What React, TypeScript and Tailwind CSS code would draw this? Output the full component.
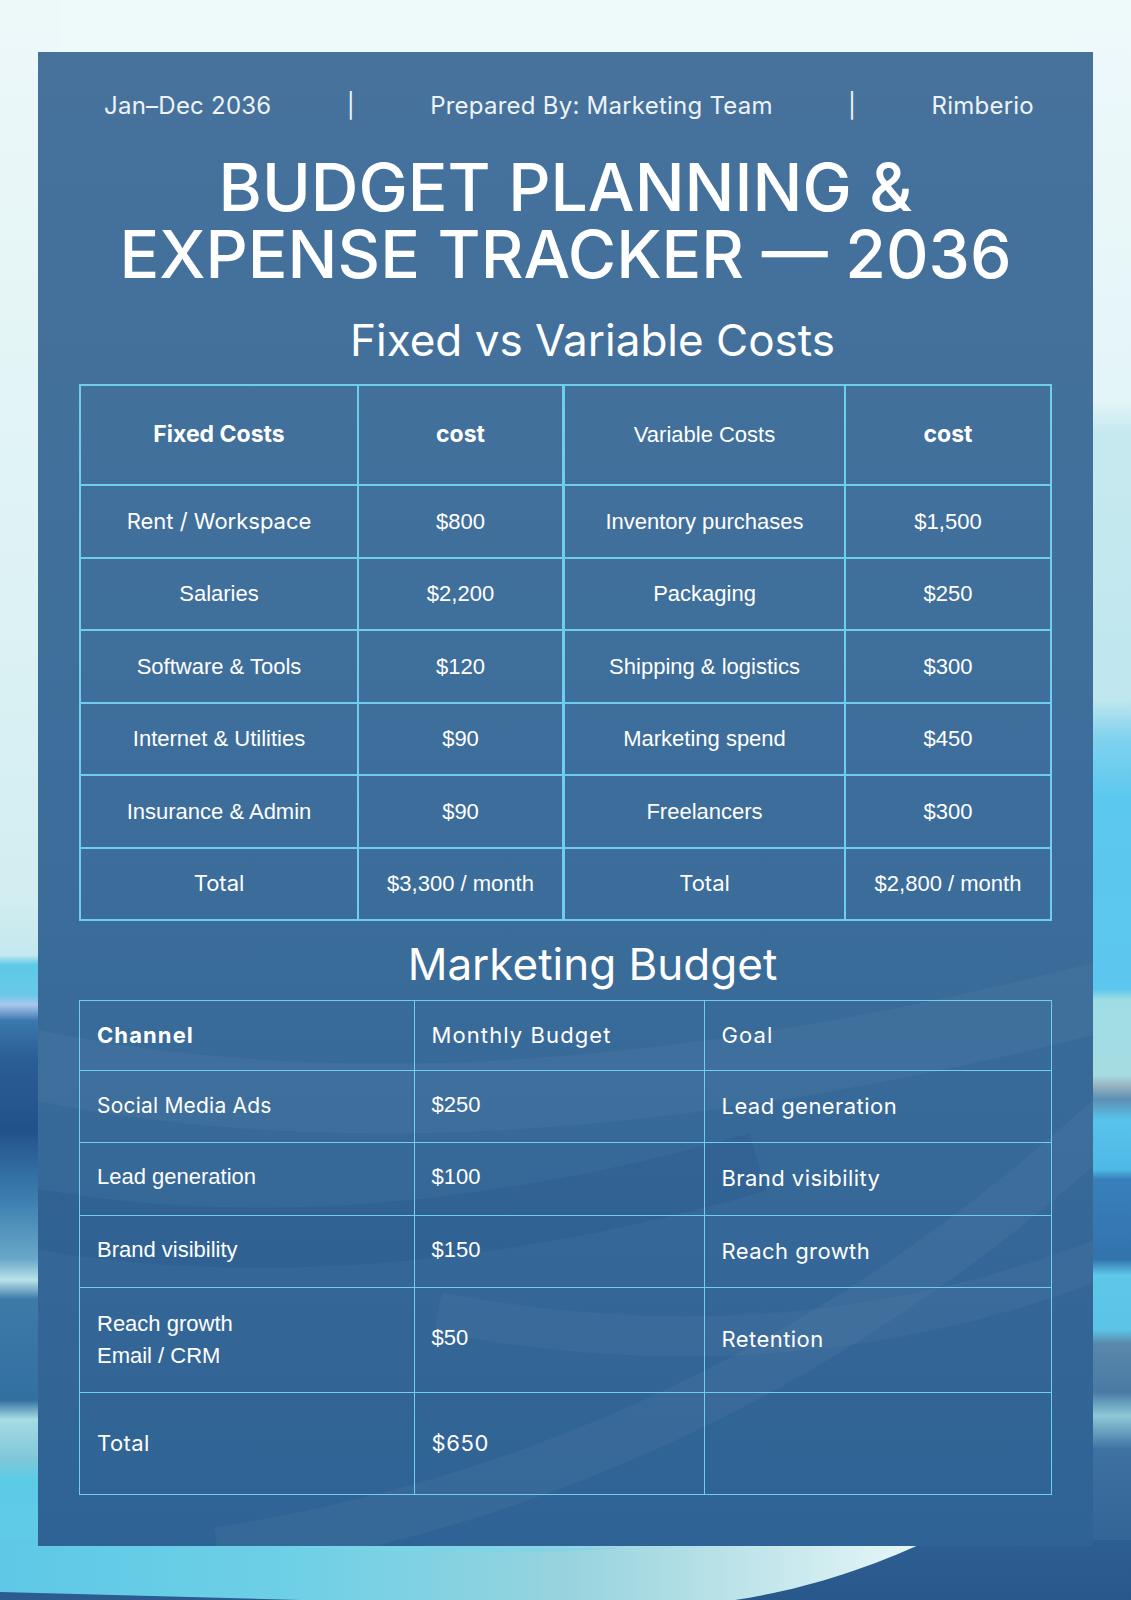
import React from "react";

const LINE = "border-[#6fcdee]";
const INTER = "font-['Inter',sans-serif]";
const ARIAL = "font-['Liberation_Sans',Arial,sans-serif]";

type Cell = { t: string; f: "i" | "a" | "b" };

const fixedRows: Cell[][] = [
  [{ t: "Rent / Workspace", f: "i" }, { t: "$800", f: "a" }, { t: "Inventory purchases", f: "a" }, { t: "$1,500", f: "a" }],
  [{ t: "Salaries", f: "a" }, { t: "$2,200", f: "a" }, { t: "Packaging", f: "a" }, { t: "$250", f: "a" }],
  [{ t: "Software & Tools", f: "a" }, { t: "$120", f: "a" }, { t: "Shipping & logistics", f: "a" }, { t: "$300", f: "a" }],
  [{ t: "Internet & Utilities", f: "a" }, { t: "$90", f: "a" }, { t: "Marketing spend", f: "a" }, { t: "$450", f: "a" }],
  [{ t: "Insurance & Admin", f: "a" }, { t: "$90", f: "a" }, { t: "Freelancers", f: "a" }, { t: "$300", f: "a" }],
  [{ t: "Total", f: "i" }, { t: "$3,300 / month", f: "a" }, { t: "Total", f: "i" }, { t: "$2,800 / month", f: "a" }],
];

function fontCls(f: Cell["f"]) {
  if (f === "i") return `${INTER} text-[22px] font-normal`;
  if (f === "b") return `${INTER} text-[23px] font-bold`;
  return `${ARIAL} text-[22px]`;
}

function Background() {
  return (
    <svg className="absolute left-0 top-0" width="1131" height="1600" viewBox="0 0 1131 1600">
      <defs>
        <linearGradient id="bg" x1="0" y1="0" x2="0" y2="1600" gradientUnits="userSpaceOnUse">
          <stop offset="0" stopColor="#eef9fa" />
          <stop offset="0.5" stopColor="#dcf2f4" />
          <stop offset="1" stopColor="#c8eaf0" />
        </linearGradient>
        <linearGradient id="ls" x1="0" y1="0" x2="0" y2="1600" gradientUnits="userSpaceOnUse">
          <stop offset="0" stopColor="#edf8f9" />
          <stop offset="0.375" stopColor="#ddf2f4" />
          <stop offset="0.56" stopColor="#d2eef1" />
          <stop offset="0.597" stopColor="#c4e8ee" />
          <stop offset="0.603" stopColor="#5ccae8" />
          <stop offset="0.622" stopColor="#6bc9e6" />
          <stop offset="0.628" stopColor="#a9c6ef" />
          <stop offset="0.638" stopColor="#3a78ad" />
          <stop offset="0.662" stopColor="#2b5e94" />
          <stop offset="0.706" stopColor="#22528a" />
          <stop offset="0.75" stopColor="#3c7fb0" />
          <stop offset="0.787" stopColor="#6aa8c8" />
          <stop offset="0.8" stopColor="#b8e2ea" />
          <stop offset="0.812" stopColor="#3d7aa8" />
          <stop offset="0.875" stopColor="#3370a2" />
          <stop offset="0.887" stopColor="#a6dce5" />
          <stop offset="0.912" stopColor="#7fc7d8" />
          <stop offset="0.925" stopColor="#5ccbe8" />
          <stop offset="0.987" stopColor="#63cbe6" />
          <stop offset="0.995" stopColor="#2b5b8f" />
        </linearGradient>
        <linearGradient id="rs" x1="0" y1="0" x2="0" y2="1600" gradientUnits="userSpaceOnUse">
          <stop offset="0" stopColor="#eef9fa" />
          <stop offset="0.25" stopColor="#e4f5f7" />
          <stop offset="0.27" stopColor="#c6e9ef" />
          <stop offset="0.437" stopColor="#c0e7ee" />
          <stop offset="0.462" stopColor="#7fd2ee" />
          <stop offset="0.5" stopColor="#5bc8f0" />
          <stop offset="0.618" stopColor="#5cc6ee" />
          <stop offset="0.625" stopColor="#9fdde4" />
          <stop offset="0.672" stopColor="#a6dce2" />
          <stop offset="0.678" stopColor="#9ab6c4" />
          <stop offset="0.687" stopColor="#5d8fb3" />
          <stop offset="0.7" stopColor="#58c3ec" />
          <stop offset="0.731" stopColor="#4fb9e6" />
          <stop offset="0.737" stopColor="#3880bb" />
          <stop offset="0.787" stopColor="#3373ae" />
          <stop offset="0.797" stopColor="#5ec8ea" />
          <stop offset="0.831" stopColor="#5cc4e6" />
          <stop offset="0.84" stopColor="#5a88aa" />
          <stop offset="0.87" stopColor="#4a7aa4" />
          <stop offset="0.885" stopColor="#8dc9d8" />
          <stop offset="0.906" stopColor="#3e72a2" />
          <stop offset="1" stopColor="#2c5c90" />
        </linearGradient>
        <linearGradient id="bs" x1="0" y1="0" x2="1131" y2="0" gradientUnits="userSpaceOnUse">
          <stop offset="0" stopColor="#5ec8e6" />
          <stop offset="0.27" stopColor="#6fd0e6" />
          <stop offset="0.5" stopColor="#97d3de" />
          <stop offset="0.64" stopColor="#b9e2e8" />
          <stop offset="0.8" stopColor="#e4f5f6" />
        </linearGradient>
        <linearGradient id="bd" x1="0" y1="1546" x2="0" y2="1600" gradientUnits="userSpaceOnUse">
          <stop offset="0" stopColor="#2d5e92" />
          <stop offset="1" stopColor="#28578b" />
        </linearGradient>
      </defs>
      <rect x="0" y="0" width="1131" height="1600" fill="url(#bg)" />
      <rect x="0" y="0" width="60" height="1600" fill="url(#ls)" />
      <rect x="1070" y="0" width="61" height="1600" fill="url(#rs)" />
      <rect x="0" y="1540" width="1131" height="60" fill="url(#bs)" />
      <path d="M0 1592 L300 1600 L0 1600 Z" fill="#2b5b8f" />
      <path d="M930 1540 C 860 1572, 800 1590, 735 1600 L 1131 1600 L 1131 1540 Z" fill="url(#bd)" />
      <path d="M300 1548 C 420 1552, 520 1556, 620 1548 L300 1546 Z" fill="#7ad6ea" opacity="0.6" />
    </svg>
  );
}

function PanelWaves() {
  return (
    <svg className="pointer-events-none absolute left-0 top-0" width="1055" height="1494" viewBox="0 0 1055 1494">
      <path d="M -60 1000 Q 420 1120 1120 930" stroke="#ffffff" strokeOpacity="0.035" strokeWidth="70" fill="none" />
      <path d="M -40 1160 Q 300 1230 720 1110" stroke="#16467a" strokeOpacity="0.16" strokeWidth="60" fill="none" />
      <path d="M 180 1500 Q 700 1420 1100 1040" stroke="#ffffff" strokeOpacity="0.035" strokeWidth="50" fill="none" />
      <path d="M 400 1260 Q 760 1330 1080 1200" stroke="#ffffff" strokeOpacity="0.03" strokeWidth="40" fill="none" />
    </svg>
  );
}

function FixedTable() {
  const widths = ["w-[278px]", "w-[206px]", "w-[281px]", "w-[206px]"];
  const rb = ["border-r-2", "border-r-[3px]", "border-r-2", "border-r-2"];
  const header: Cell[] = [
    { t: "Fixed Costs", f: "b" },
    { t: "cost", f: "b" },
    { t: "Variable Costs", f: "a" },
    { t: "cost", f: "b" },
  ];
  return (
    <div className={`flex flex-col border-l-2 border-t-2 ${LINE}`}>
      <div className="flex">
        {header.map((c, j) => (
          <div
            key={j}
            className={`${widths[j]} ${rb[j]} border-b-2 ${LINE} flex h-[100px] items-center justify-center pb-[2px] text-white ${fontCls(c.f)}`}
          >
            {c.t}
          </div>
        ))}
      </div>
      {fixedRows.map((row, i) => (
        <div key={i} className="flex">
          {row.map((c, j) => (
            <div
              key={j}
              className={`${widths[j]} ${rb[j]} border-b-2 ${LINE} flex h-[72.5px] items-center justify-center text-white ${fontCls(c.f)}`}
            >
              {c.t}
            </div>
          ))}
        </div>
      ))}
    </div>
  );
}

function MarketingTable() {
  const widths = ["w-[334.5px]", "w-[290px]", "w-[347px]"];
  const heights = ["h-[69.5px]", "h-[72px]", "h-[73px]", "h-[72px]", "h-[105px]", "h-[102px]"];
  const cellBase = `border-r-[1.5px] border-b-[1.5px] ${LINE} flex items-center pl-[17px] text-white`;
  const goal = `${INTER} text-[22px] tracking-[0.02em]`;
  const rows: React.ReactNode[][] = [
    [
      <span className={`${INTER} text-[22px] font-bold tracking-[0.05em]`}>Channel</span>,
      <span className={`${INTER} text-[22px] tracking-[0.05em]`}>Monthly Budget</span>,
      <span className={`${INTER} text-[22px] tracking-[0.05em]`}>Goal</span>,
    ],
    [
      <span className={`${INTER} text-[21px] tracking-[0.01em]`}>Social Media Ads</span>,
      <span className={`${ARIAL} text-[22px] -mt-[4px]`}>$250</span>,
      <span className={goal}>Lead generation</span>,
    ],
    [
      <span className={`${ARIAL} text-[22px] -mt-[4px]`}>Lead generation</span>,
      <span className={`${ARIAL} text-[22px] -mt-[4px]`}>$100</span>,
      <span className={goal}>Brand visibility</span>,
    ],
    [
      <span className={`${ARIAL} text-[22px] -mt-[4px]`}>Brand visibility</span>,
      <span className={`${ARIAL} text-[22px] -mt-[4px]`}>$150</span>,
      <span className={goal}>Reach growth</span>,
    ],
    [
      <span className={`${ARIAL} text-[22px] leading-[32px]`}>
        Reach growth
        <br />
        Email / CRM
      </span>,
      <span className={`${ARIAL} text-[22px] -mt-[4px]`}>$50</span>,
      <span className={goal}>Retention</span>,
    ],
    [
      <span className={`${INTER} text-[22px] tracking-[0.02em]`}>Total</span>,
      <span className={`${INTER} text-[22px] tracking-[0.03em]`}>$650</span>,
      <span />,
    ],
  ];
  return (
    <div className={`flex flex-col border-l-[1.5px] border-t-[1.5px] ${LINE}`}>
      {rows.map((row, i) => (
        <div key={i} className="flex">
          {row.map((c, j) => (
            <div key={j} className={`${widths[j]} ${heights[i]} ${cellBase}`}>
              {c}
            </div>
          ))}
        </div>
      ))}
    </div>
  );
}

export default function App() {
  return (
    <div className="relative h-[1600px] w-full overflow-hidden bg-[#eaf7f8]">
      <Background />
      <div className="relative mx-auto mt-[52px] w-[1055px] bg-gradient-to-b from-[#46729c] via-[#3d6e9b] to-[#2f6395] px-[41px] pb-[51px] pt-[38px] text-white">
        <PanelWaves />
        <div className="relative">
          <div
            className={`flex h-[32px] items-center justify-between pl-[25px] pr-[18px] text-[24px] leading-[32px] tracking-[0.01em] text-[#eef3f8] ${INTER}`}
          >
            <span>Jan–Dec 2036</span>
            <span>|</span>
            <span>Prepared By: Marketing Team</span>
            <span>|</span>
            <span>Rimberio</span>
          </div>
          <h1 className={`mt-[31.5px] text-center text-[66px] font-medium text-white ${INTER}`}>
            <div className="h-[67px] leading-[67px]">BUDGET PLANNING &amp;</div>
            <div className="h-[67px] leading-[67px]">EXPENSE TRACKER — 2036</div>
          </h1>
          <h2 className={`mt-[26.5px] pl-[54px] text-center text-[44px] font-normal leading-[52px] ${INTER}`}>
            Fixed vs Variable Costs
          </h2>
          <div className="mt-[18px]">
            <FixedTable />
          </div>
          <h2 className={`mt-[17px] pl-[54px] text-center text-[44px] font-normal leading-[52px] ${INTER}`}>
            Marketing Budget
          </h2>
          <div className="mt-[10px]">
            <MarketingTable />
          </div>
        </div>
      </div>
    </div>
  );
}
